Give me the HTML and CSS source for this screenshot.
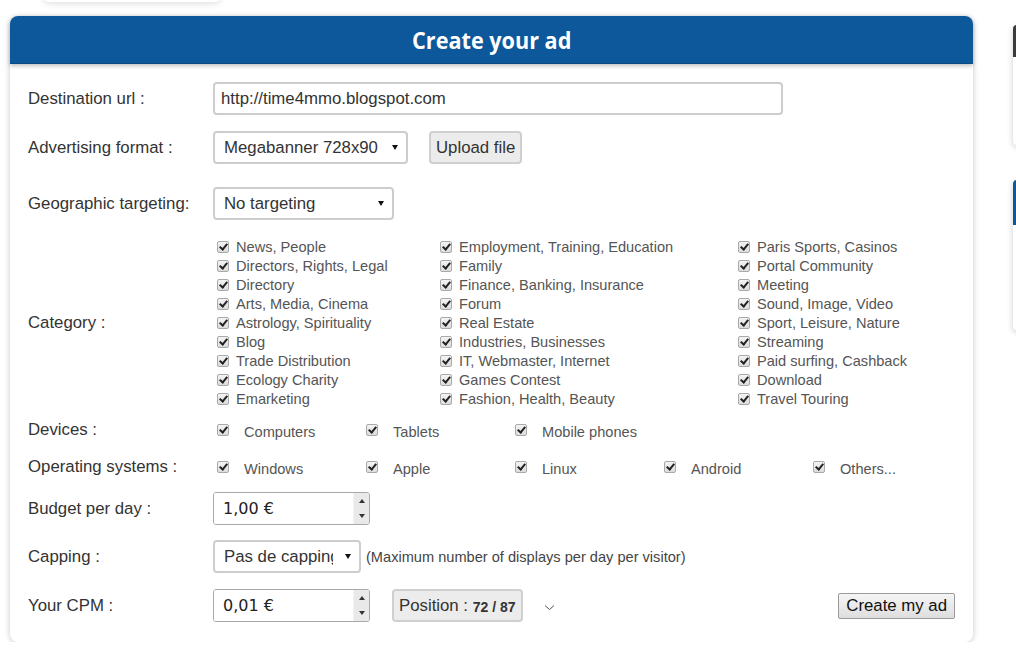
FILE: index.html
```html
<!DOCTYPE html>
<html lang="en">

<head>
    <meta charset="UTF-8">
    <meta name="viewport" content="width=device-width, initial-scale=1.0">
    <title>Create your ad</title>
    <link rel="stylesheet" href="styles.css">
</head>

<body>
    <div class="page">
        <div class="main-col">
            <div class="top-card"></div>

            <div class="panel">
                <div class="panel-head">
                    <h2>Create your ad</h2>
                </div>

                <form class="ad-form">
                    <div class="row row-url">
                        <label class="lbl">Destination url :</label>
                        <input class="field url-field" type="text" value="http://time4mmo.blogspot.com">
                    </div>

                    <div class="row row-format">
                        <label class="lbl">Advertising format :</label>
                        <div class="select-wrap format-select">
                            <select class="field">
                                <option>Megabanner 728x90</option>
                            </select>
                        </div>
                        <button type="button" class="grey-btn upload-btn">Upload file</button>
                    </div>

                    <div class="row row-geo">
                        <label class="lbl">Geographic targeting:</label>
                        <div class="select-wrap geo-select">
                            <select class="field">
                                <option>No targeting</option>
                            </select>
                        </div>
                    </div>

                    <div class="row row-cat">
                        <label class="lbl">Category :</label>
                        <div class="cat-grid">
                            <ul class="cat-col col-a">
                                <li><span class="chk"></span>News, People</li>
                                <li><span class="chk"></span>Directors, Rights, Legal</li>
                                <li><span class="chk"></span>Directory</li>
                                <li><span class="chk"></span>Arts, Media, Cinema</li>
                                <li><span class="chk"></span>Astrology, Spirituality</li>
                                <li><span class="chk"></span>Blog</li>
                                <li><span class="chk"></span>Trade Distribution</li>
                                <li><span class="chk"></span>Ecology Charity</li>
                                <li><span class="chk"></span>Emarketing</li>
                            </ul>
                            <ul class="cat-col col-b">
                                <li><span class="chk"></span>Employment, Training, Education</li>
                                <li><span class="chk"></span>Family</li>
                                <li><span class="chk"></span>Finance, Banking, Insurance</li>
                                <li><span class="chk"></span>Forum</li>
                                <li><span class="chk"></span>Real Estate</li>
                                <li><span class="chk"></span>Industries, Businesses</li>
                                <li><span class="chk"></span>IT, Webmaster, Internet</li>
                                <li><span class="chk"></span>Games Contest</li>
                                <li><span class="chk"></span>Fashion, Health, Beauty</li>
                            </ul>
                            <ul class="cat-col col-c">
                                <li><span class="chk"></span>Paris Sports, Casinos</li>
                                <li><span class="chk"></span>Portal Community</li>
                                <li><span class="chk"></span>Meeting</li>
                                <li><span class="chk"></span>Sound, Image, Video</li>
                                <li><span class="chk"></span>Sport, Leisure, Nature</li>
                                <li><span class="chk"></span>Streaming</li>
                                <li><span class="chk"></span>Paid surfing, Cashback</li>
                                <li><span class="chk"></span>Download</li>
                                <li><span class="chk"></span>Travel Touring</li>
                            </ul>
                        </div>
                    </div>

                    <div class="row row-dev">
                        <label class="lbl">Devices :</label>
                        <ul class="opt-list">
                            <li><span class="chk"></span>Computers</li>
                            <li><span class="chk"></span>Tablets</li>
                            <li><span class="chk"></span>Mobile phones</li>
                        </ul>
                    </div>

                    <div class="row row-os">
                        <label class="lbl">Operating systems :</label>
                        <ul class="opt-list">
                            <li><span class="chk"></span>Windows</li>
                            <li><span class="chk"></span>Apple</li>
                            <li><span class="chk"></span>Linux</li>
                            <li><span class="chk"></span>Android</li>
                            <li><span class="chk"></span>Others...</li>
                        </ul>
                    </div>

                    <div class="row row-budget">
                        <label class="lbl">Budget per day :</label>
                        <div class="num-field">
                            <input type="text" value="1,00 €">
                            <span class="spin"><span class="up"></span><span class="down"></span></span>
                        </div>
                    </div>

                    <div class="row row-capping">
                        <label class="lbl">Capping :</label>
                        <div class="select-wrap cap-select">
                            <select class="field">
                                <option>Pas de capping</option>
                            </select>
                        </div>
                        <span class="hint">(Maximum number of displays per day per visitor)</span>
                    </div>

                    <div class="row row-cpm">
                        <label class="lbl">Your CPM :</label>
                        <div class="num-field">
                            <input type="text" value="0,01 €">
                            <span class="spin"><span class="up"></span><span class="down"></span></span>
                        </div>
                        <div class="position-box">Position : <strong>72 / 87</strong></div>
                        <span class="chevron">
                            <svg width="11" height="7" viewBox="0 0 11 7"><path d="M1 1.5 L5.5 5.5 L10 1.5" fill="none" stroke="#555" stroke-width="1"/></svg>
                        </span>
                        <button type="button" class="submit-btn">Create my ad</button>
                    </div>
                </form>
            </div>
        </div>

        <aside class="side-col">
            <div class="side-card">
                <div class="side-head dark"></div>
                <div class="side-body b1"></div>
            </div>
            <div class="side-card">
                <div class="side-head blue"></div>
                <div class="side-body b2"></div>
            </div>
        </aside>
    </div>
</body>

</html>
```

FILE: styles.css
```css
* {
    margin: 0;
    padding: 0;
    box-sizing: border-box;
    list-style: none;
}

body {
    background-color: #fff;
    font-family: 'Liberation Sans', Arial, sans-serif;
    color: #333;
    overflow: hidden;
}

.page {
    display: flex;
    align-items: flex-start;
    gap: 40px;
    padding-left: 10px;
}

.main-col {
    width: 963px;
    flex-shrink: 0;
}

.top-card {
    width: 178px;
    height: 20px;
    margin: -18px 0 0 33px;
    background-color: #fff;
    border-radius: 6px;
    box-shadow: 0 2px 6px rgba(0, 0, 0, 0.12);
}

.panel {
    margin-top: 14px;
    background-color: #fff;
    border-radius: 8px;
    box-shadow: 0 1px 6px rgba(0, 0, 0, 0.22);
}

.panel-head {
    height: 48px;
    background-color: #0c589b;
    border-radius: 8px 8px 0 0;
    border-bottom: 1px solid #0a4a82;
    box-shadow: 0 2px 4px rgba(0, 0, 0, 0.25);
    display: flex;
    align-items: center;
    justify-content: center;
}

.panel-head h2 {
    font-family: 'Open Sans', sans-serif;
    font-weight: 700;
    font-size: 23px;
    color: #fff;
    transform: scaleX(0.94);
    padding-top: 1px;
}

.ad-form {
    padding: 18px 18px 20px 18px;
}

.row {
    display: flex;
    align-items: center;
}

.lbl {
    width: 185px;
    flex-shrink: 0;
    font-size: 16.8px;
    color: #333;
}

.field {
    height: 33px;
    border: 2px solid #cdcdcd;
    border-radius: 4px;
    background-color: #fff;
    font-family: 'Liberation Sans', Arial, sans-serif;
    font-size: 16.8px;
    color: #333;
    padding: 0 9px;
    outline: none;
}

.row-url { margin-bottom: 16px; }
.row-format { margin-bottom: 23px; }
.row-geo { margin-bottom: 17px; }
.row-cat { margin-bottom: 12px; }
.row-dev { margin-bottom: 17px; }
.row-os { margin-bottom: 15px; }
.row-budget { margin-bottom: 15px; }
.row-capping { margin-bottom: 16px; }

.url-field {
    width: 570px;
    padding-left: 6px;
}

.select-wrap {
    position: relative;
}

.select-wrap select {
    appearance: none;
    -webkit-appearance: none;
    width: 100%;
    padding-right: 24px;
}

.select-wrap::after {
    content: "";
    position: absolute;
    right: 10px;
    top: 14px;
    border-left: 3px solid transparent;
    border-right: 3px solid transparent;
    border-top: 5px solid #111;
    pointer-events: none;
}

.format-select { width: 195px; }
.geo-select { width: 181px; }
.cap-select { width: 148px; }

.cap-select select {
    padding-right: 26px;
    text-overflow: clip;
}

.grey-btn {
    height: 33px;
    margin-left: 21px;
    padding: 0 5px;
    background-color: #ececec;
    border: 2px solid #cfcfcf;
    border-radius: 4px;
    font-family: 'Liberation Sans', Arial, sans-serif;
    font-size: 16.8px;
    color: #333;
}

.cat-grid {
    display: flex;
    padding-left: 4px;
}

.cat-col li {
    display: flex;
    align-items: center;
    height: 19px;
    font-size: 14.6px;
    color: #555;
}

.cat-col .chk {
    margin-right: 7px;
}

.col-a { width: 223px; }
.col-b { width: 298px; }

.chk {
    position: relative;
    display: inline-block;
    width: 12px;
    height: 12px;
    flex-shrink: 0;
    border: 1px solid #a9a9a9;
    border-radius: 2px;
    background: linear-gradient(#f4f4f4, #dcdcdc);
}

.chk::after {
    content: "";
    position: absolute;
    left: 3px;
    top: 0px;
    width: 3px;
    height: 6px;
    border-right: 2px solid #222;
    border-bottom: 2px solid #222;
    transform: rotate(40deg);
}

.opt-list {
    display: flex;
    padding-left: 4px;
}

.opt-list li {
    display: flex;
    align-items: center;
    width: 149px;
    padding-top: 3px;
    font-size: 14.6px;
    color: #555;
}

.opt-list .chk {
    margin-right: 15px;
    position: relative;
    top: -2px;
}

.num-field {
    display: flex;
    width: 157px;
    height: 33px;
    border: 1px solid #a9a9a9;
    border-radius: 3px;
    overflow: hidden;
    background-color: #fff;
}

.num-field input {
    flex: 1;
    min-width: 0;
    border: none;
    outline: none;
    padding-left: 9px;
    font-family: 'DejaVu Sans', sans-serif;
    font-size: 16px;
    color: #222;
}

.spin {
    width: 16px;
    display: flex;
    flex-direction: column;
    background-color: #e9e9e9;
    border-left: 1px solid #f4f4f4;
}

.spin span {
    flex: 1;
    display: flex;
    align-items: center;
    justify-content: center;
}

.spin .up::before {
    content: "";
    border-left: 3px solid transparent;
    border-right: 3px solid transparent;
    border-bottom: 4px solid #333;
}

.spin .down::before {
    content: "";
    border-left: 3px solid transparent;
    border-right: 3px solid transparent;
    border-top: 4px solid #333;
}

.hint {
    margin-left: 5px;
    font-size: 14.6px;
    color: #444;
}

.position-box {
    height: 33px;
    margin-left: 22px;
    padding: 0 5px;
    display: flex;
    align-items: center;
    background-color: #ececec;
    border: 2px solid #cfcfcf;
    border-radius: 4px;
    font-size: 16.8px;
    color: #333;
    white-space: pre;
}

.position-box strong {
    font-size: 14px;
    padding-top: 2px;
}

.chevron {
    margin-left: 21px;
    display: flex;
    padding-top: 3px;
}

.submit-btn {
    margin-left: auto;
    height: 26px;
    padding: 0 7px;
    background: linear-gradient(#f5f5f5, #dedede);
    border: 1px solid #9a9a9a;
    border-radius: 2px;
    font-family: 'Liberation Sans', Arial, sans-serif;
    font-size: 16.8px;
    color: #111;
}

.side-col {
    width: 220px;
    flex-shrink: 0;
    padding-top: 25px;
}

.side-card {
    background-color: #fff;
    border-radius: 4px;
    box-shadow: 0 2px 6px rgba(0, 0, 0, 0.2);
    margin-bottom: 35px;
}

.side-head {
    height: 32px;
    border-radius: 4px 4px 0 0;
}

.side-head.dark { background-color: #3a3a3a; }
.side-head.blue { background-color: #0c589b; height: 45px; }

.b1 { height: 88px; }
.b2 { height: 105px; }
```
